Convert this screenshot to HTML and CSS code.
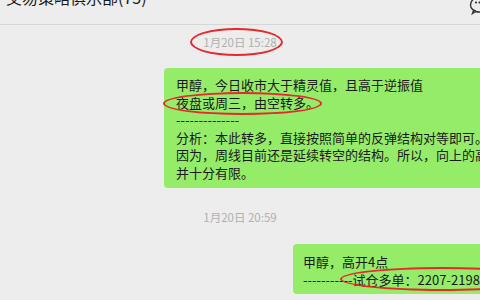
FILE: index.html
```html
<!DOCTYPE html>
<html lang="zh-CN">
<head>
    <meta charset="UTF-8">
    <meta name="viewport" content="width=device-width, initial-scale=1.0">
    <title>交易策略俱乐部</title>
    <link rel="stylesheet" href="styles.css">
</head>
<body>

    <!-- Chat header -->
    <div class="header">
        <div class="title">交易策略俱乐部(75)</div>
        <svg class="more" width="20" height="20" viewBox="0 0 20 20">
            <path d="M7 14 C3 13 1.5 10.5 1.5 8 C1.5 3.5 5.5 0.5 10 0.5 C14.5 0.5 18.5 3.5 18.5 8 C18.5 12 14.5 15 10 15 C8.5 15 7.5 14.8 6.5 14.5 L3.5 16.5 L4.5 13.5" fill="none" stroke="#333" stroke-width="1.4"/>
            <circle cx="7" cy="5.5" r="1.1" fill="#333"/>
            <circle cx="10.5" cy="5.5" r="1.1" fill="#333"/>
        </svg>
    </div>

    <!-- Messages -->
    <div class="chat">
        <div class="time">
            1月20日 15:28
            <span class="mark mark-time"></span>
        </div>

        <div class="bubble bubble-wide">
            <div>甲醇，今日收市大于精灵值，且高于逆振值</div>
            <div>夜盘或周三，由空转多。</div>
            <div>--------------</div>
            <div>分析：本此转多，直接按照简单的反弹结构对等即可。</div>
            <div>因为，周线目前还是延续转空的结构。所以，向上的高度</div>
            <div>并十分有限。</div>
            <span class="mark mark-line"></span>
        </div>

        <div class="time">1月20日 20:59</div>

        <div class="bubble bubble-short">
            <div>甲醇，高开4点</div>
            <div>-----------试仓多单：2207-2198附近</div>
            <span class="mark mark-order"></span>
        </div>
    </div>

</body>
</html>
```

FILE: styles.css
```css
body {
    margin: 0;
    width: 480px;
    height: 300px;
    overflow: hidden;
    background: #ededed;
    color: #191919;
    font-family: "Noto Sans CJK SC", "Noto Sans", sans-serif;
}

.header {
    position: relative;
    display: flex;
    height: 24px;
    border-bottom: 1px solid #d6d6d6;
}

.title {
    font-size: 16px;
    line-height: 20px;
    margin-top: -13px;
    padding-left: 6px;
    white-space: nowrap;
}

.more {
    position: absolute;
    left: 469px;
    top: -3px;
}

.chat {
    display: flex;
    flex-direction: column;
    white-space: nowrap;
}

.time {
    position: relative;
    align-self: center;
    font-size: 11.5px;
    line-height: 12px;
    color: #b0b0b0;
    margin-top: 11px;
}

.time + .bubble {
    margin-top: 20px;
}

.bubble + .time {
    margin-top: 23px;
}

.bubble {
    position: relative;
    background: #95ec69;
    border-radius: 4px;
    font-size: 13px;
    line-height: 17.5px;
    padding: 8px 12px 7px;
    width: 400px;
}

.bubble-wide {
    margin-left: 164px;
}

.bubble-short {
    margin-left: 293px;
    margin-top: 21px !important;
    padding: 9px 10px 6px;
}

/* red hand-drawn marks */
.mark {
    position: absolute;
    border: 2px solid #e8282b;
    border-radius: 50%;
}

.mark-time {
    left: -13px;
    top: -8px;
    width: 89px;
    height: 24px;
}

.mark-line {
    left: -1px;
    top: 24px;
    width: 155px;
    height: 19px;
}

.mark-order {
    left: 47px;
    top: 23px;
    width: 200px;
    height: 20px;
}
```
